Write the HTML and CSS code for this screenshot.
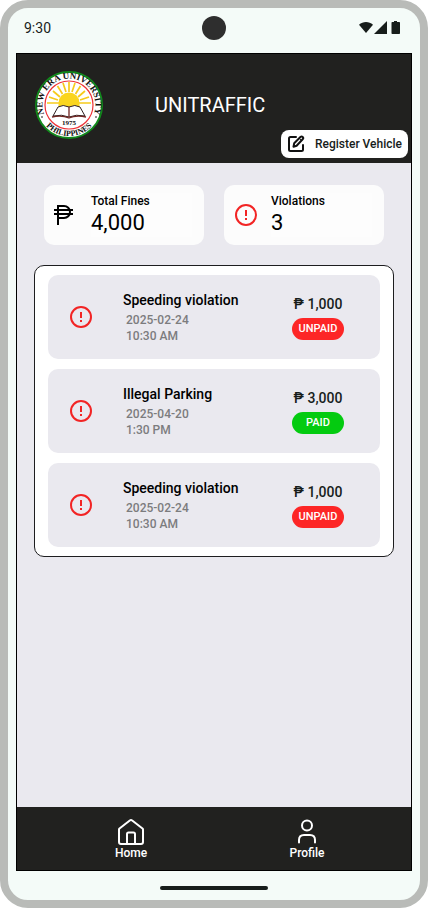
FILE: index.html
```html
<!DOCTYPE html>
<html lang="en">
<head>
<meta charset="utf-8">
<meta name="viewport" content="width=device-width, initial-scale=1">
<title>Unitraffic</title>
<link rel="stylesheet" href="styles.css">
</head>
<body>
<svg class="sprite" aria-hidden="true">
  <symbol id="alert" viewBox="0 0 24 24">
    <circle cx="12" cy="12" r="10" fill="none" stroke="currentColor" stroke-width="2"/>
    <path d="M11 7h2v6h-2zM11 15h2v2h-2z" fill="currentColor"/>
  </symbol>
</svg>
<div class="phone">
  <div class="status">
    <span class="time">9:30</span>
    <span class="camera"></span>
    <svg class="signals" viewBox="0 0 46 16" width="46" height="16" aria-hidden="true">
      <path d="M1 4.800C5 1.200 11 1.200 15 4.800L8 13z"/>
      <path d="M29 1v13H16z"/>
      <path d="M36 1h3v1h2.200q.8 0 .8.8v10.400q0 .8-.8.8h-6.900q-.8 0-.8-.8V2.800q0-.8.8-.8H36z"/>
    </svg>
  </div>
  <div class="screen">
    <header class="header">
      <div class="brand">
        <svg class="seal" viewBox="0 0 68 68" role="img" aria-label="New Era University seal">
          <defs>
            <path id="arc-top" d="M11.600 48A26.400 26.400 0 1 1 56.400 48"/>
            <path id="arc-bottom" d="M6.300 48A31 31 0 0 0 61.700 48"/>
          </defs>
          <circle cx="34" cy="34" r="33" fill="#fff" stroke="#118a1c" stroke-width="2"/>
          <circle cx="34" cy="34" r="24" fill="#fff" stroke="#ee3338" stroke-width="1.200"/>
          <g stroke="#f6cb1c" stroke-width="1.700">
            <path d="M34 11v10M28 12l3 9M40 12l-3 9M22.500 15l5 8M45.500 15l-5 8M18 20l7 6M50 20l-7 6M14 26l9 3M54 26l-9 3M12 32h12M56 32H44"/>
          </g>
          <path d="M23.500 36v-4a10.500 10.500 0 0 1 21 0v4z" fill="#fad51e"/>
          <path d="M34 36q-6-3-11 0l-5 9q9-2 16 1 7-3 16-1l-5-9q-5-3-11 0z" fill="#fff" stroke="#302020" stroke-width="1"/>
          <path d="M34 36v10M17 46q10-2 17 1 7-3 17-1" fill="none" stroke="#702522" stroke-width="1.300"/>
          <text class="seal-year" x="34" y="54" text-anchor="middle">1975</text>
          <text class="seal-name"><textPath href="#arc-top" startOffset="50%" text-anchor="middle">NEW ERA UNIVERSITY</textPath></text>
          <text class="seal-place"><textPath href="#arc-bottom" startOffset="50%" text-anchor="middle">PHILIPPINES</textPath></text>
          <circle cx="7" cy="46" r=".8"/><circle cx="61" cy="46" r=".8"/>
        </svg>
        <h1 class="title">UNITRAFFIC</h1>
      </div>
      <button class="register" type="button">
        <svg viewBox="0 0 18 18" width="18" height="18" fill="none" stroke="#111" stroke-width="2" stroke-linecap="round" stroke-linejoin="round" aria-hidden="true">
          <path d="M9 2H3.500Q2 2 2 3.500v11Q2 16 3.500 16h11q1.500 0 1.500-1.500V10"/>
          <path d="M6.500 11.800l.7-3.600 6.500-6.400q1-.8 2 .2t.2 2L9.600 10.800z"/>
          <path d="M12.300 3.400l2.300 2.300" stroke-width="1"/>
        </svg>
        Register Vehicle
      </button>
    </header>
    <main class="main">
      <section class="stats">
        <div class="stat">
          <svg class="icon" viewBox="0 0 24 24" fill="none" stroke="#000" stroke-width="2" aria-hidden="true">
            <path d="M4 22V3h6a5 5 0 0 1 0 12H4M0 7h19M0 11h19"/>
          </svg>
          <div class="stat-text"><span class="label">Total Fines</span><span class="value">4,000</span></div>
        </div>
        <div class="stat">
          <svg class="icon alert"><use href="#alert"/></svg>
          <div class="stat-text"><span class="label">Violations</span><span class="value">3</span></div>
        </div>
      </section>
      <ul class="list">
        <li class="item">
          <svg class="icon alert"><use href="#alert"/></svg>
          <div class="info"><h2>Speeding violation</h2><p>2025-02-24<br>10:30 AM</p></div>
          <div class="due"><span class="amount">₱ 1,000</span><span class="pill unpaid">UNPAID</span></div>
        </li>
        <li class="item">
          <svg class="icon alert"><use href="#alert"/></svg>
          <div class="info"><h2>Illegal Parking</h2><p>2025-04-20<br>1:30 PM</p></div>
          <div class="due"><span class="amount">₱ 3,000</span><span class="pill paid">PAID</span></div>
        </li>
        <li class="item">
          <svg class="icon alert"><use href="#alert"/></svg>
          <div class="info"><h2>Speeding violation</h2><p>2025-02-24<br>10:30 AM</p></div>
          <div class="due"><span class="amount">₱ 1,000</span><span class="pill unpaid">UNPAID</span></div>
        </li>
      </ul>
    </main>
    <nav class="nav">
      <a href="#home">
        <svg viewBox="0 0 26 26" width="26" height="26" fill="none" stroke="#fff" stroke-width="2" stroke-linejoin="round" aria-hidden="true">
          <path d="M1 10.500Q1 10 1.500 9.500L11.800 1.500q1.200-.9 2.400 0L24.500 9.500q.5.500.5 1V23q0 2-2 2H3q-2 0-2-2z"/>
          <path d="M9 25V15q0-1.500 1.500-1.500h5Q17 13.500 17 15v10"/>
        </svg>
        Home
      </a>
      <a href="#profile">
        <svg viewBox="0 0 26 26" width="26" height="26" fill="none" stroke="#fff" stroke-width="2" stroke-linecap="round" aria-hidden="true">
          <circle cx="13" cy="6.500" r="5"/>
          <path d="M5 23.500v-2.500q0-5 5-5h6q5 0 5 5v2.500"/>
        </svg>
        Profile
      </a>
    </nav>
  </div>
  <div class="gesture"><span></span></div>
</div>
</body>
</html>
```
FILE: styles.css
```css
* { box-sizing: border-box; }

body {
  margin: 0;
  background: #fff;
  font-family: Roboto, "Liberation Sans", sans-serif;
  font-size: 12px;
  line-height: 16px;
  color: #171d1b;
}

h1, h2, p, ul { margin: 0; padding: 0; }
a { color: inherit; text-decoration: none; }
.sprite { position: absolute; width: 0; height: 0; }

.phone {
  display: flex;
  flex-direction: column;
  min-height: 100vh;
  padding: 0 8px;
  border: 8px solid #b9bbb8;
  border-radius: 28px;
  background: #f4fbf8;
}

.status {
  display: grid;
  grid-template-columns: 1fr auto 1fr;
  align-items: center;
  height: 45px;
  padding: 0 8px 5px;
}
.time { font-size: 14px; }
.camera { width: 24px; height: 24px; border-radius: 50%; background: #2e2e2e; }
.signals { justify-self: end; fill: #171d1b; }

.screen {
  flex: 1;
  display: flex;
  flex-direction: column;
  border: 1px solid #000;
  background: #eae9ef;
}

.header {
  display: flex;
  align-items: center;
  min-height: 109px;
  padding: 0 3px 5px 18px;
  background: #21211f;
}
.brand { display: flex; align-items: center; gap: 52px; padding-bottom: 2px; }
.seal { width: 68px; height: 68px; flex: none; }
.seal text { font-family: "Liberation Serif", serif; font-weight: 700; fill: #111; }
.seal-name { font-size: 9px; }
.seal-place { font-size: 8px; }
.seal-year { font-size: 7px; }
.title { font-size: 20px; line-height: 28px; font-weight: 400; color: #fff; }
.register {
  display: flex;
  align-items: center;
  align-self: flex-end;
  gap: 10px;
  height: 28px;
  margin-left: auto;
  padding: 0 6px;
  border: 0;
  border-radius: 8px;
  background: #fff;
  color: #171d1b;
  font: 500 12px/16px Roboto, sans-serif;
  white-space: nowrap;
}

.main { flex: 1; padding: 22px 17px; }

.stats {
  display: grid;
  grid-template-columns: 1fr 1fr;
  gap: 20px;
  margin: 0 10px 20px;
}
.stat {
  display: flex;
  align-items: center;
  gap: 13px;
  height: 60px;
  padding: 0 12px 0 10px;
  border-radius: 10px;
  background: #fcfcfc;
  color: #000;
}
.icon { width: 24px; height: 24px; flex: none; }
.alert { color: #f22424; }
.stat-text { flex: 1; display: flex; flex-direction: column; background: #fdfdfd; }
.label { font-weight: 500; }
.value { font-size: 22px; line-height: 28px; }

.list {
  display: flex;
  flex-direction: column;
  gap: 10px;
  padding: 9px 13px;
  border: 1px solid #1d1d1f;
  border-radius: 10px;
  background: #fff;
  list-style: none;
}
.item {
  display: flex;
  align-items: center;
  height: 84px;
  padding: 0 36px 0 21px;
  border-radius: 10px;
  background: #eae9ef;
}
.info { flex: 1; margin-left: 30px; }
.info h2 { font-size: 14px; line-height: 20px; font-weight: 500; color: #000; }
.info p { margin-top: 2px; padding-left: 3px; color: #7c7c7e; font-weight: 500; }
.due { display: flex; flex-direction: column; align-items: center; gap: 4px; width: 52px; }
.amount { font-size: 14px; line-height: 20px; font-weight: 500; white-space: nowrap; }
.pill {
  width: 100%;
  border-radius: 11px;
  color: #fff;
  font-size: 11px;
  line-height: 22px;
  font-weight: 500;
  text-align: center;
}
.unpaid { background: #fd2626; }
.paid { background: #04cb10; }

.nav {
  display: grid;
  grid-template-columns: 1fr 1fr;
  align-items: center;
  height: 63px;
  padding: 2px 16px 0 26px;
  background: #21211f;
  color: #fff;
  font-weight: 500;
}
.nav a { display: flex; flex-direction: column; align-items: center; }
.nav svg { display: block; }

.gesture { display: flex; justify-content: center; align-items: center; height: 29px; }
.gesture span { width: 108px; height: 4px; margin-top: 4px; border-radius: 2px; background: #171d1b; }
```
